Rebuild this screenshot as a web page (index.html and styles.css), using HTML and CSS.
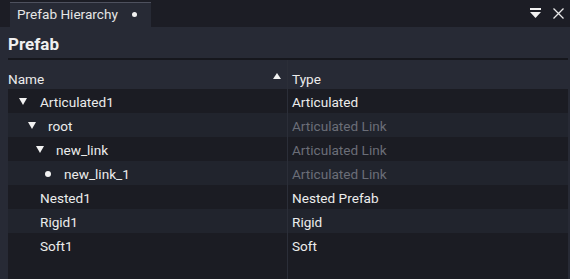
FILE: index.html
```html
<!DOCTYPE html>
<html>
<head>
<meta charset="utf-8">
<link rel="stylesheet" href="styles.css">
</head>
<body>
<div class="topbar">
  <div class="tab">
    <span class="tab-title">Prefab Hierarchy</span>
    <span class="tab-dot"></span>
  </div>
  <div class="tools">
    <svg class="ico-menu" width="11" height="11" viewBox="0 0 11 11"><rect x="0" y="0" width="11" height="2" fill="#f2f2f2"/><path d="M0 4 H11 L5.5 10 Z" fill="#f2f2f2"/></svg>
    <svg class="ico-close" width="11" height="11" viewBox="0 0 11 11"><path d="M0.5 0.5 L10.5 10.5 M10.5 0.5 L0.5 10.5" stroke="#e8e8e8" stroke-width="1.3"/></svg>
  </div>
</div>
<div class="panel">
  <div class="title">Prefab</div>
  <div class="table">
    <div class="head">
      <div class="cell name-h">Name<svg class="sort" width="8" height="6" viewBox="0 0 8 6"><path d="M0 6 L4 0 L8 6 Z" fill="#f2f2f2"/></svg></div>
      <div class="cell type">Type</div>
    </div>
    <div class="row">
      <div class="cell name lvl0"><span class="tw"><svg width="8" height="7" viewBox="0 0 8 7"><path d="M0 0 H8 L4 7 Z" fill="#f2f2f2"/></svg></span>Articulated1</div>
      <div class="cell type">Articulated</div>
    </div>
    <div class="row alt">
      <div class="cell name lvl1"><span class="tw"><svg width="8" height="7" viewBox="0 0 8 7"><path d="M0 0 H8 L4 7 Z" fill="#f2f2f2"/></svg></span>root</div>
      <div class="cell type muted">Articulated Link</div>
    </div>
    <div class="row">
      <div class="cell name lvl2"><span class="tw"><svg width="8" height="7" viewBox="0 0 8 7"><path d="M0 0 H8 L4 7 Z" fill="#f2f2f2"/></svg></span>new_link</div>
      <div class="cell type muted">Articulated Link</div>
    </div>
    <div class="row alt">
      <div class="cell name lvl3"><span class="tw"><span class="bullet"></span></span>new_link_1</div>
      <div class="cell type muted">Articulated Link</div>
    </div>
    <div class="row">
      <div class="cell name lvl0"><span class="tw"></span>Nested1</div>
      <div class="cell type">Nested Prefab</div>
    </div>
    <div class="row alt">
      <div class="cell name lvl0"><span class="tw"></span>Rigid1</div>
      <div class="cell type">Rigid</div>
    </div>
    <div class="row">
      <div class="cell name lvl0"><span class="tw"></span>Soft1</div>
      <div class="cell type">Soft</div>
    </div>
    <div class="row filler">
      <div class="cell name"></div>
      <div class="cell type"></div>
    </div>
  </div>
</div>
</body>
</html>
```
FILE: styles.css
```css
html, body {
  margin: 0;
  padding: 0;
  height: 100%;
  overflow: hidden;
}
body {
  background: #272a35;
  font-family: Roboto, "Noto Sans", sans-serif;
  font-size: 13.6px;
  color: #ececec;
  display: flex;
  flex-direction: column;
}
.topbar {
  height: 27px;
  flex: none;
  background: #1c1d25;
  display: flex;
  align-items: flex-end;
  box-sizing: border-box;
}
.tab {
  margin-left: 10px;
  width: 141px;
  height: 25px;
  box-sizing: border-box;
  border-top: 1px solid #4e515e;
  background: #272a35;
  display: flex;
  align-items: center;
  padding-left: 7px;
  padding-bottom: 2px;
}
.tab-title {
  color: #e6e6e6;
}
.tab-dot {
  width: 5px;
  height: 5px;
  border-radius: 50%;
  background: #f2f2f2;
  margin-left: 14px;
}
.tools {
  margin-left: auto;
  align-self: stretch;
  display: flex;
  align-items: center;
  gap: 12px;
  padding-right: 6px;
  padding-bottom: 1px;
}
.tools svg { display: block; }
.panel {
  flex: 1;
  display: flex;
  flex-direction: column;
  padding: 0 2px 0 8px;
  min-height: 0;
}
.title {
  height: 33px;
  flex: none;
  box-sizing: border-box;
  border-bottom: 2px solid #16171d;
  font-size: 17px;
  font-weight: 700;
  color: #f0f0f0;
  display: flex;
  align-items: center;
  padding-top: 3px;
}
.table {
  flex: 1;
  display: flex;
  flex-direction: column;
  min-height: 0;
}
.head, .row {
  display: grid;
  grid-template-columns: 279px 1fr;
}
.head {
  height: 29px;
  flex: none;
  align-items: stretch;
}
.head .cell {
  padding-top: 9px;
}
.row {
  height: 24px;
  flex: none;
  background: #1b1c23;
}
.row .cell {
  padding-top: 1px;
}
.row.alt {
  background: #21242d;
}
.row.filler {
  flex: 1;
  height: auto;
}
.cell {
  display: flex;
  align-items: center;
  white-space: nowrap;
  box-sizing: border-box;
}
.cell.type {
  border-left: 1px solid #2b2e38;
  padding-left: 4px;
}
.name-h {
  justify-content: space-between;
  padding-right: 6px;
}
.sort { display: block; margin-top: -6px; }
.muted {
  color: #6b6e78;
}
.tw {
  width: 18px;
  display: inline-flex;
  align-items: center;
  justify-content: flex-start;
}
.tw svg { display: block; }
.lvl0 { padding-left: 11px; }
.lvl0 .tw { width: 21px; }
.lvl1 { padding-left: 20px; }
.lvl1 .tw { width: 20px; }
.lvl2 { padding-left: 28px; }
.lvl2 .tw { width: 20px; }
.lvl3 { padding-left: 36px; }
.lvl3 .tw { width: 20px; }
.bullet {
  width: 6px;
  height: 6px;
  border-radius: 50%;
  background: #f2f2f2;
  margin-left: 1px;
}
```
